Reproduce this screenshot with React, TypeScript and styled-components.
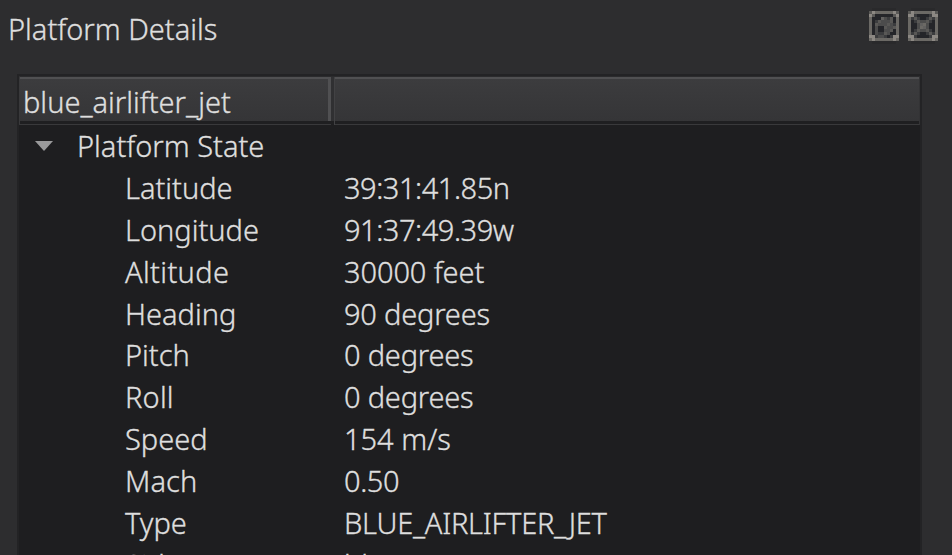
import React from "react";
import styled, { createGlobalStyle } from "styled-components";

const GlobalStyle = createGlobalStyle`
  * { box-sizing: border-box; }
  html, body { margin: 0; height: 100%; overflow: hidden; background: #2d2d2f; }
`;

const Dock = styled.section`
  width: 952px;
  height: 555px;
  overflow: hidden;
  background: #2d2d2f;
  color: #dedede;
  font-family: "Noto Sans", "Open Sans", sans-serif;
  font-size: 29px;
  font-weight: 350;
  -webkit-text-stroke: 0.35px #dedede;
  white-space: pre;
`;

const TitleBar = styled.header`
  display: flex;
  justify-content: space-between;
  height: 74px;
  padding: 8px 14px 0 8px;
`;

const Label = styled.span<{ $spacing?: number }>`
  display: block;
  height: 42px;
  line-height: 42px;
  letter-spacing: ${({ $spacing }) => $spacing ?? 0}px;
`;

const TitleButtons = styled.div`
  display: flex;
  gap: 9px;
`;

const IconButton = styled.button`
  width: 30px;
  height: 36px;
  padding: 0;
  border: 0;
  background: none;
  svg { display: block; }
`;

const Tree = styled.div`
  width: 905px;
  height: 500px;
  margin-left: 17px;
  border: 2px solid #232325;
  background: #1e1e20;
`;

const HeaderRow = styled.div`
  display: flex;
  height: 49px;
  border: 1px solid #39393b;
  border-top-color: #2b2b2d;
  border-right-color: #333335;
  background: #1f1f21;
`;

const HeaderCell = styled.div<{ $width?: number }>`
  flex: ${({ $width }) => ($width ? `0 0 ${$width}px` : "1")};
  height: 44px;
  padding: 2px 0 0 3px;
  border-top: 2px solid #505052;
  border-right: ${({ $width }) => ($width ? "3px solid #505052" : "0")};
  background: linear-gradient(#3c3c3e, #353537);
`;

const Divider = styled.div`
  width: 4px;
  height: 48px;
  border-right: 1px solid #424244;
  background: linear-gradient(#303032 44px, #1f1f21 44px);
`;

const Row = styled.div<{ $child?: boolean }>`
  display: grid;
  grid-template-columns: ${({ $child }) => ($child ? "219px 1fr" : "1fr")};
  height: 41.875px;
  padding-left: ${({ $child }) => ($child ? "106px" : "0")};
`;

const Branch = styled.div`
  display: flex;
  align-items: center;
  gap: 24px;
  padding-left: 16px;
`;

/* Each character is one 3px cell of a toolbar glyph. */
const shades: Record<string, string> = {
  s: "#29292b",
  e: "#6b6965",
  b: "#8c8883",
  c: "#595856",
  d: "#242529",
  m: "#3b3c3e",
  g: "#4c4c4c",
  l: "#626160",
};

const floatGlyph = [
  ".ssssssss.",
  "cbeeeeeebc",
  "bcddddddcb",
  "edddlgmcde",
  "edmcgggcde",
  "edcgggcgme",
  "edgddcggce",
  "edgddggcde",
  "edgmmcgdde",
  "bbmggmdmbb",
  "ebeeeeeebe",
  ".ssssssss.",
];

const closeGlyph = [
  ".ssssssss.",
  "cbeeeeeebc",
  "bbmddddmbb",
  "emcmddmcme",
  "edmcggcmde",
  "eddglegdde",
  "eddgelgdde",
  "edmcggcmde",
  "emcmddmcme",
  "bbmddddmbb",
  "ebeeeeeebe",
  ".ssssssss.",
];

function Glyph({ cells }: { cells: string[] }) {
  return (
    <svg width="30" height="36" viewBox="0 0 10 12" shapeRendering="crispEdges">
      {cells.flatMap((line, y) =>
        [...line].map((c, x) =>
          shades[c] ? <rect key={`${x}-${y}`} x={x} y={y} width="1" height="1" fill={shades[c]} /> : null,
        ),
      )}
    </svg>
  );
}

const rows: [string, string, number, number][] = [
  ["Latitude", "39:31:41.85n", 0, -0.45],
  ["Longitude", "91:37:49.39w", 0, -0.45],
  ["Altitude", "30000 feet", 0.35, -0.1],
  ["Heading", "90 degrees", 0, -0.2],
  ["Pitch", "0 degrees", 0, -0.2],
  ["Roll", "0 degrees", 0.2, -0.2],
  ["Speed", "154 m/s", 0, 0],
  ["Mach", "0.50", 0.1, -0.4],
  ["Type", "BLUE_AIRLIFTER_JET", 0, -0.25],
  ["Side", "blue", 0, 0],
];

export default function App() {
  return (
    <Dock>
      <GlobalStyle />
      <TitleBar>
        <Label>Platform Details</Label>
        <TitleButtons>
          <IconButton aria-label="Float"><Glyph cells={floatGlyph} /></IconButton>
          <IconButton aria-label="Close"><Glyph cells={closeGlyph} /></IconButton>
        </TitleButtons>
      </TitleBar>
      <Tree>
        <HeaderRow>
          <HeaderCell $width={311}><Label>blue_airlifter_jet</Label></HeaderCell>
          <Divider />
          <HeaderCell />
        </HeaderRow>
        <Row>
          <Branch>
            <svg width="18" height="10"><path d="M0 0H18L9 10Z" fill="#9a9a9b" /></svg>
            <Label>Platform State</Label>
          </Branch>
        </Row>
        {rows.map(([name, value, nameSpacing, valueSpacing]) => (
          <Row key={name} $child>
            <Label $spacing={nameSpacing}>{name}</Label>
            <Label $spacing={valueSpacing}>{value}</Label>
          </Row>
        ))}
      </Tree>
    </Dock>
  );
}
